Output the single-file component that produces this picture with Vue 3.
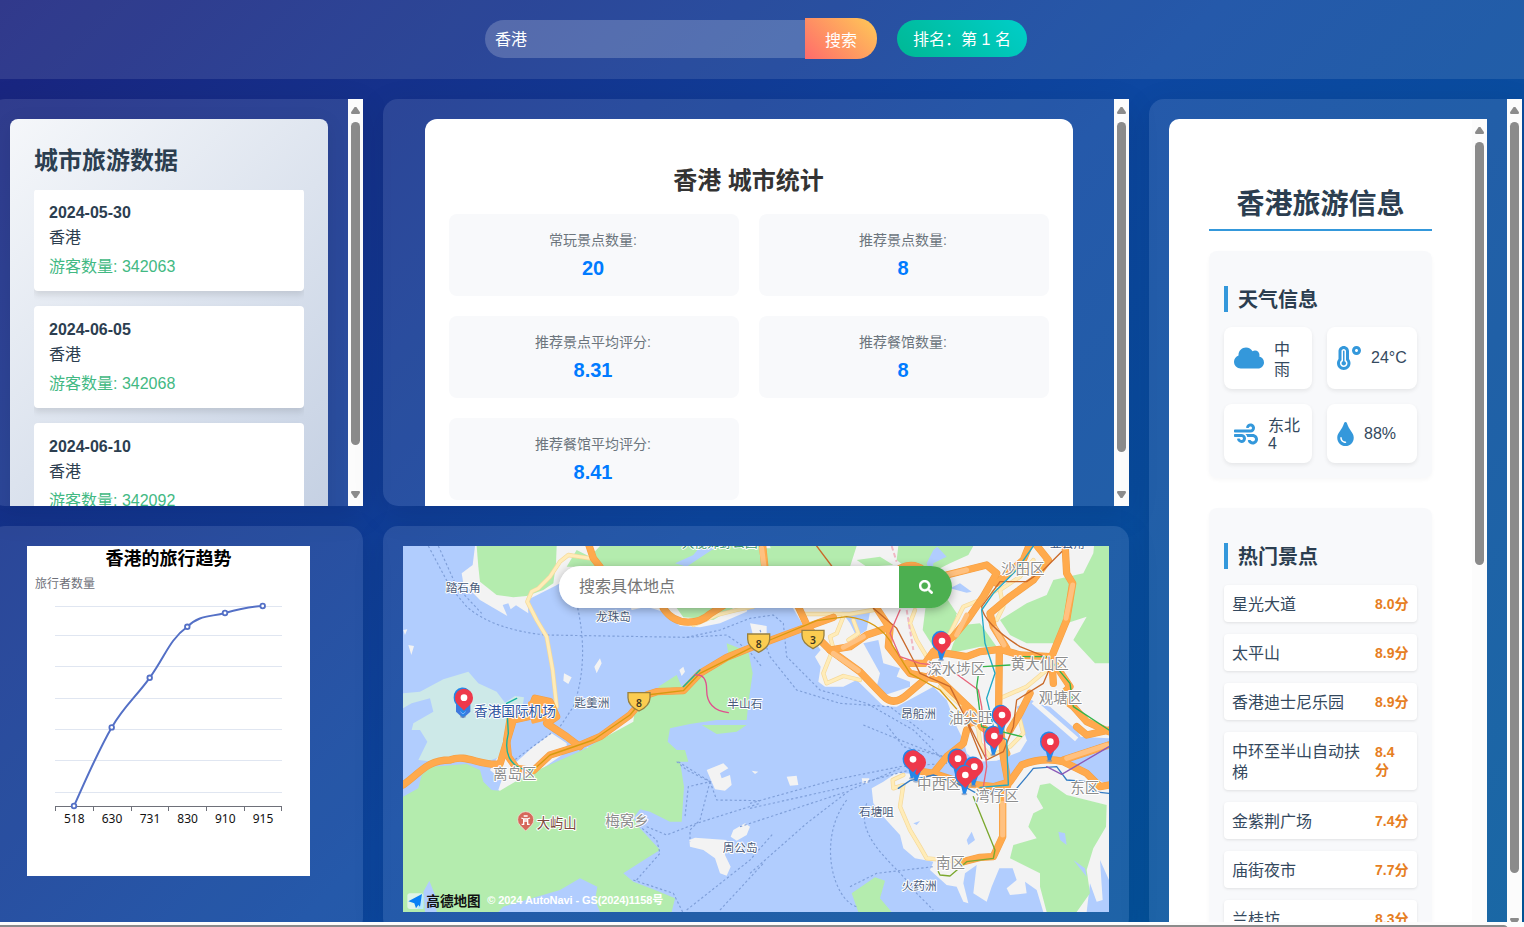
<script setup>
const travel = [
  { date: '2024-05-30', count: 342063 },
  { date: '2024-06-05', count: 342068 },
  { date: '2024-06-10', count: 342092 }
]
const stats = [
  ['常玩景点数量:', '20'],
  ['推荐景点数量:', '8'],
  ['推荐景点平均评分:', '8.31'],
  ['推荐餐馆数量:', '8'],
  ['推荐餐馆平均评分:', '8.41']
]
const spots = [
  ['星光大道', '8.0分'],
  ['太平山', '8.9分'],
  ['香港迪士尼乐园', '8.9分'],
  ['中环至半山自动扶梯', '8.4分'],
  ['金紫荆广场', '7.4分'],
  ['庙街夜市', '7.7分'],
  ['兰桂坊', '8.3分']
]
const points = [
  [47, 260, '518'],
  [84.7, 181.4, '630'],
  [122.7, 131.8, '731'],
  [160.3, 80.8, '830'],
  [198, 67, '910'],
  [235.7, 60, '915']
]
const gridLines = [60.5, 89.5, 120.5, 152.5, 183.5, 214.5, 246.5]
const ticks = [28.5, 66.5, 104.5, 141.5, 179.5, 217.5, 254.5]

const orangeRoads = [
  'M9 735 C60 700 80 660 150 660 C200 640 240 680 300 672 L340 540 L385 530 L405 475 L450 485 L470 530 L440 550 L500 590 L540 620',
  'M330 540 L320 600 L325 650 L350 685 L400 692 L450 645 L530 620 L600 590 L690 525 L740 465 L770 455 L850 452 L900 400 L980 352 L1060 320 L1190 272 L1300 232',
  'M565 10 L580 55 L600 80',
  'M1088 18 L1095 85',
  'M790 205 C830 265 900 250 930 222 L980 190',
  'M1195 200 L1225 265 L1290 330 L1380 395 L1450 468 Q1480 500 1520 465 L1590 405',
  'M1430 205 L1470 265 L1465 320 L1530 400 L1620 420 L1720 515 L1745 560 L1800 600 L1820 640',
  'M1290 330 L1350 320 L1400 285 L1460 265',
  'M1500 85 Q1540 65 1570 90',
  'M1640 105 L1760 75 L1790 100 L1750 170 L1705 235 L1660 290 L1600 335 L1575 370 L1520 370',
  'M1600 345 L1640 340 L1700 350 L1740 335 L1800 328 L1860 345 L1950 350 L2010 440 L1980 470 L2020 500 L2060 545 L2127 575',
  'M1905 10 L1945 60 L1900 120 L1830 170 L1770 220 L1780 260 L1820 325',
  'M1995 10 L2000 100 L2018 130 L2000 240 L1955 350 L1960 430',
  'M1890 10 L1870 60 L1790 130',
  'M1798 330 L1796 500 L1810 650 L1825 730 L1808 780 L1808 890 L1780 950 L1740 952 L1690 965',
  'M1540 690 L1600 700 L1690 730 L1780 740 L1830 725 L1865 675 Q1930 650 1990 665 L2060 700 L2100 740 L2127 735',
  'M1700 570 L1690 610 L1640 650 L1600 700',
  'M1990 660 L2127 615',
  'M2030 560 L2060 585 L2127 570',
  'M1890 460 L1860 520 L1830 570'
]
const yellowRoads = [
  'M570 55 L505 45 L480 65 L450 110 L415 145 L395 155 L382 185 L410 240 L440 290 L458 390 L470 500',
  'M880 255 L950 225 L1010 210 L1060 200',
  'M1210 222 L1350 222 L1420 210',
  'M1330 230 L1310 280 L1290 290 L1300 325 L1270 400 L1280 430 L1330 408 L1380 420',
  'M1360 240 L1375 280 L1345 300',
  'M1545 210 L1530 250 L1550 300 L1580 350',
  'M1790 150 L1740 180 L1690 200 L1650 280 L1620 330',
  'M1900 60 L1860 110 L1800 150 L1810 200 L1790 240',
  'M1940 390 L1880 440 L1800 475',
  'M1620 440 L1700 510 L1735 565 L1740 610 L1770 650 L1830 620 L1870 580 L1860 540',
  'M1510 705 L1478 720 L1480 745 L1510 735 L1500 800 L1530 870 L1560 920 L1580 955 L1690 965'
]
const ferries = [
  'M85 18 L150 140 L200 200 Q280 270 440 285 L860 292 L980 285 L1045 330 L1085 380',
  'M115 18 L170 140 L245 220',
  'M530 190 Q570 360 520 500 L480 560 L330 670',
  'M860 292 L960 270 L1050 235 L1120 225 L1150 250 L1160 350 L1260 450 L1400 490 L1540 570 L1640 670',
  'M1080 270 L1110 350 L1190 450 L1320 490 L1470 500 L1600 600',
  'M1390 555 L1500 600 L1640 655',
  'M1050 790 L1300 720 L1500 680 L1640 670',
  'M1050 805 L1340 740 L1530 690',
  'M1020 860 L1340 755',
  'M1050 1000 L1220 850 L1350 750 L1500 685',
  'M1400 790 C1360 900 1500 980 1550 1060 L1600 1110',
  'M1340 780 C1250 900 1300 1080 1370 1100',
  'M835 665 L930 725 L900 840 L870 870 L870 905',
  'M830 665 L860 690 L930 725 L865 740 L855 830',
  'M740 860 L800 885 L890 850 L1080 790',
  'M710 1020 L780 940 L770 900 L720 860',
  'M700 1020 L820 1060 L850 1120',
  'M860 1110 L1050 960 L1120 880',
  'M960 1110 L1090 970',
  'M930 725 L950 780 L1080 782',
  'M1350 1040 L1430 1000 L1600 980',
  'M1460 555 L1510 620 L1635 650'
]
const labels = [
  ['踏石角', 137, 157, 'place'],
  ['龙珠岛', 588, 243, 'place'],
  ['匙羹洲', 523, 500, 'place'],
  ['半山石', 982, 504, 'place'],
  ['昂船洲', 1503, 535, 'place'],
  ['石塘咀', 1377, 829, 'place'],
  ['火药洲', 1505, 1050, 'place'],
  ['周公岛', 968, 935, 'place'],
  ['亚公角', 1950, 24, 'place'],
  ['大榄郊野公园', 845, 21, 'park'],
  ['沙田区', 1803, 102, 'area'],
  ['深水埗区', 1582, 402, 'area'],
  ['黄大仙区', 1832, 387, 'area'],
  ['观塘区', 1916, 489, 'area'],
  ['油尖旺', 1646, 549, 'area'],
  ['离岛区', 279, 717, 'area'],
  ['梅窝乡', 616, 858, 'area'],
  ['中西区', 1551, 746, 'area'],
  ['湾仔区', 1726, 782, 'area'],
  ['东区', 2011, 760, 'area2'],
  ['南区', 1608, 984, 'area2'],
  ['香港国际机场', 222, 528, 'airport'],
  ['大屿山', 410, 864, 'peak']
]
const pins = [
  [191, 473], [1625, 303], [1782, 588], [1805, 525], [1950, 605],
  [1550, 667], [1538, 658], [1673, 656], [1722, 680], [1695, 705]
]
const shields = [[717, 485, '8'], [1076, 309, '8'], [1239, 298, '3']]
</script>

<template>
  <div class="page">
    <div class="stage">
      <header class="topbar">
        <div class="search">
          <div class="search-input">香港</div>
          <button class="search-btn">搜索</button>
        </div>
        <div class="rank">排名：第 1 名</div>
      </header>

      <main class="board">
        <section class="panel scroll">
          <div class="body left-body">
            <div class="travel">
              <h2>城市旅游数据</h2>
              <div class="travel-list">
                <div v-for="t in travel" :key="t.date" class="travel-item">
                  <b>{{ t.date }}</b>
                  <span>香港</span>
                  <span class="count">游客数量: {{ t.count }}</span>
                </div>
              </div>
            </div>
          </div>
          <div class="bar"><i class="up"></i><i class="thumb t-left"></i><i class="down"></i></div>
        </section>

        <section class="panel scroll">
          <div class="body mid-body">
            <div class="stats">
              <h2>香港 城市统计</h2>
              <div class="stat-grid">
                <div v-for="s in stats" :key="s[0]" class="stat">
                  <span>{{ s[0] }}</span>
                  <b>{{ s[1] }}</b>
                </div>
              </div>
            </div>
          </div>
          <div class="bar"><i class="up"></i><i class="thumb t-mid"></i><i class="down"></i></div>
        </section>

        <section class="panel scroll tall">
          <div class="body right-body">
            <div class="info">
              <div class="info-main">
                <h1>香港旅游信息</h1>
                <div class="box weather-box">
                  <h3>天气信息</h3>
                  <div class="weather">
                    <div class="w-item">
                      <svg width="30" height="24" viewBox="0 0 640 512"><path d="M537.6 226.6c4.1-10.7 6.4-22.4 6.4-34.6 0-53-43-96-96-96-19.7 0-38.1 6-53.3 16.2C367 64.2 315.3 32 256 32c-88.4 0-160 71.6-160 160 0 2.7.1 5.4.2 8.1C40.2 219.8 0 273.2 0 336c0 79.5 64.5 144 144 144h368c70.7 0 128-57.3 128-128 0-61.9-44-113.6-102.4-125.4z" /></svg>
                      <span class="cjk-wrap">中雨</span>
                    </div>
                    <div class="w-item">
                      <svg width="24" height="24" viewBox="0 0 512 512"><path d="M416 0c-52.9 0-96 43.1-96 96s43.1 96 96 96 96-43.1 96-96-43.1-96-96-96zm0 128c-17.7 0-32-14.3-32-32s14.3-32 32-32 32 14.3 32 32-14.3 32-32 32zm-160-16C256 50.1 205.9 0 144 0S32 50.1 32 112v166.5C12.3 303.2 0 334 0 368c0 79.5 64.5 144 144 144s144-64.5 144-144c0-34-12.3-64.9-32-89.5V112zM144 448c-44.1 0-80-35.9-80-80 0-25.5 12.2-48.9 32-63.8V112c0-26.5 21.5-48 48-48s48 21.5 48 48v192.2c19.8 14.8 32 38.3 32 63.8 0 44.1-35.9 80-80 80zm16-125.1V112c0-8.8-7.2-16-16-16s-16 7.2-16 16v210.9c-18.6 6.6-32 24.2-32 45.1 0 26.5 21.5 48 48 48s48-21.5 48-48c0-20.9-13.4-38.5-32-45.1z" /></svg>
                      <span>24°C</span>
                    </div>
                    <div class="w-item">
                      <svg width="24" height="24" viewBox="0 0 512 512"><path d="M156.7 256H16c-8.8 0-16 7.2-16 16v32c0 8.8 7.2 16 16 16h142.2c15.9 0 30.8 10.9 33.4 26.6 3.3 20-12.1 37.4-31.6 37.4-14.1 0-26.1-9.2-30.4-21.9-2.1-6.3-8.6-10.1-15.2-10.1H81.6c-9.8 0-17.7 8.8-15.9 18.4 8.6 44.1 47.6 77.6 94.2 77.6 57.1 0 102.7-50.1 95.2-108.6C249 291 205.4 256 156.7 256zM16 224h336c59.7 0 106.8-54.8 93.8-116.7-7.6-36.2-36.9-65.5-73.1-73.1-55.4-11.6-105.1 24.9-114.9 75.5-1.9 9.6 6.1 18.3 15.8 18.3h32.8c6.7 0 13.1-3.8 15.2-10.1C325.9 105.2 337.9 96 352 96c19.4 0 34.9 17.4 31.6 37.4-2.6 15.7-17.4 26.6-33.4 26.6H16c-8.8 0-16 7.2-16 16v32c0 8.8 7.2 16 16 16zm384 32H243.7c19.3 16.6 33.2 38.8 39.8 64H400c26.5 0 48 21.5 48 48s-21.5 48-48 48c-17.9 0-33.3-9.9-41.6-24.4-2.9-5-8.7-7.6-14.5-7.6h-33.8c-10.9 0-19 10.8-15.3 21.1 17.8 50.6 70.5 84.8 129.4 72.3 41.2-8.7 75.1-41.6 84.7-82.7C526 321.5 470.5 256 400 256z" /></svg>
                      <span class="wind">东北<br />4</span>
                    </div>
                    <div class="w-item">
                      <svg width="17" height="24" viewBox="0 0 352 512"><path d="M205.22 22.09c-7.94-28.78-49.44-30.12-58.44 0C100.01 179.85 0 222.72 0 333.91 0 432.35 78.72 512 176 512s176-79.65 176-178.09c0-111.75-99.79-153.34-146.78-311.82zM176 448c-61.75 0-112-50.25-112-112 0-8.84 7.16-16 16-16s16 7.16 16 16c0 44.11 35.89 80 80 80 8.84 0 16 7.16 16 16s-7.16 16-16 16z" /></svg>
                      <span>88%</span>
                    </div>
                  </div>
                </div>
                <div class="box spots-box">
                  <h3>热门景点</h3>
                  <div v-for="s in spots" :key="s[0]" class="spot">
                    <span>{{ s[0] }}</span>
                    <b>{{ s[1] }}</b>
                  </div>
                </div>
              </div>
              <div class="bar inner"><i class="up"></i><i class="thumb t-inner"></i></div>
            </div>
          </div>
          <div class="bar"><i class="up"></i><i class="thumb t-right"></i><i class="down"></i></div>
        </section>

        <section class="panel chart-panel">
          <svg class="chart" width="283" height="330" viewBox="0 0 283 330">
            <text class="c-title" x="141.5" y="19" text-anchor="middle">香港的旅行趋势</text>
            <text class="c-name" x="8" y="42">旅行者数量</text>
            <path v-for="y in gridLines" :key="y" :d="`M28 ${y}H255`" stroke="#e0e6f1" />
            <path d="M28 260.5H255" stroke="#6e7079" />
            <path v-for="x in ticks" :key="x" :d="`M${x} 260V265`" stroke="#6e7079" />
            <path d="M47 260 C60 231 71 205 84.7 181.4 C97 160 108 152 122.7 131.8 C138 111 142 94 160.3 80.8 C172 69 183 71 198 67 C212 63 220 61 235.7 60" fill="none" stroke="#5470c6" stroke-width="2" />
            <circle v-for="p in points" :key="p[2]" :cx="p[0]" :cy="p[1]" r="2.3" fill="#fff" stroke="#5470c6" stroke-width="1.8" />
            <text v-for="p in points" :key="'l' + p[2]" class="c-label" :x="p[0] + 0.3" y="277" text-anchor="middle">{{ p[2] }}</text>
          </svg>
        </section>

        <section class="panel map-panel">
          <div class="map">
            <svg width="706" height="366" viewBox="9 18 2118 1098">
              <rect x="9" y="18" width="2118" height="1098" fill="#b1cdfe" />
              <g fill="#f3f3f3">
                <path d="M225 18 L218 75 L185 100 L190 130 L240 180 L322 228 L308 195 L325 190 L332 208 L348 196 L385 220 L382 180 L465 138 L480 130 L500 190 L690 195 L695 210 L740 200 L790 215 L840 258 L900 262 L960 250 L1040 215 L1050 185 L1170 190 L1215 265 L1262 330 L1245 350 L1262 380 L1255 425 L1275 440 L1330 440 L1370 420 L1450 498 L1490 500 L1600 440 L1640 480 L1670 560 L1690 600 L1700 640 L1730 665 L1790 662 L1860 635 L1885 595 L1880 565 L1860 520 L1870 480 L1950 500 L2030 570 L2040 590 L2127 595 L2127 18Z" />
                <path d="M1415 745 L1450 725 L1490 698 L1600 705 L1690 738 L1790 745 L1850 690 L1890 665 L1970 660 L2050 700 L2127 735 V1020 L2100 960 L2108 1080 L2090 1085 L2070 1030 L2060 1116 L1930 1116 L1910 1050 L1875 1025 L1880 1060 L1830 1065 L1820 1045 L1850 1020 L1838 985 L1798 985 L1775 1040 L1760 1085 L1720 1060 L1730 975 L1695 1000 L1690 1030 L1705 1090 L1690 1085 L1670 1040 L1640 1035 L1590 990 L1600 965 L1545 955 L1510 925 L1500 885 L1450 830 L1420 790Z" />
                <path d="M350 665 L400 620 L455 580 L500 610 L500 635 L400 705 L350 745 L310 762 L295 750 L305 720 L270 690 L300 640Z" />
                <path d="M560 622 L580 622 L583 650 L572 655Z M600 590 L700 520 L705 550 L640 590Z" />
                <path d="M920 690 L970 670 L985 685 L960 700 L965 715 L990 705 L995 735 L975 752 L945 748 L935 725Z M1000 870 L1035 850 L1050 860 L1040 885 L1010 902 L992 890Z M868 900 L885 893 L980 900 L975 945 L992 980 L980 1007 L960 1000 L945 955 L910 930 L870 920Z" />
                <path d="M1160 710 L1190 707 L1195 735 L1170 737Z M1385 715 L1408 715 L1405 730 L1388 730Z M1055 692 L1075 695 L1065 702Z M600 355 L605 370 L590 400 L583 380Z M492 400 L515 412 L505 432 L490 422Z M25 315 L42 318 L34 345Z M10 270 L22 268 L15 285Z M850 380 L855 395 L845 408 L838 390Z" />
                <path d="M1050 250 L1100 258 L1100 280 L1060 290Z" />
              </g>
              <g fill="#b4ecae">
                <path d="M230 18 H470 L468 70 L460 130 L430 150 L380 168 L340 172 L290 165 L240 125 L235 80Z" />
                <path d="M600 18 H1075 L1100 25 H1245 L1320 80 H500 L530 30 L570 50Z" />
                <path d="M1110 18 H1370 L1350 80 H1130Z M1370 60 L1440 50 L1480 75 L1400 80Z" />
                <path d="M830 204 H1000 L940 240 L890 235 L850 232Z" />
                <path d="M1495 18 H1720 L1705 45 L1650 70 L1600 95 L1520 85 L1490 60Z" />
                <path d="M1580 175 L1630 160 L1670 220 L1650 310 L1600 320 L1568 270Z" />
                <path d="M1880 190 L1940 165 L1960 120 L2050 100 L2080 40 L2082 18 H2127 V370 L2085 370 L2020 300 L2060 230 L2000 250 L1970 310 L1880 310 L1830 285 L1800 240Z" />
                <path d="M1660 310 L1690 255 L1740 250 L1790 320 L1740 320 L1650 340Z" />
                <path d="M9 770 L55 745 L65 705 L95 680 L200 672 L240 690 L250 725 L275 750 L300 752 L380 705 L560 625 L600 600 L700 545 L705 500 L780 455 L775 440 L830 405 L845 440 L890 395 L985 340 L980 310 L1045 335 L1058 400 L1045 490 L1040 540 L950 540 L870 552 L810 565 L803 605 L830 630 L855 630 L865 665 L840 665 L852 740 L845 845 L810 845 L750 815 L720 808 L700 835 L720 865 L780 930 L740 955 L670 1000 L700 1025 L765 1050 L825 1075 L815 1116 H600 L585 1080 L592 1040 L540 1015 L480 1050 L310 1100 L295 1116 H110 L105 1065 L88 1022 L70 1055 L75 1116 H9Z" />
                <path d="M905 555 H1040 L1010 575 L950 582Z" />
                <path d="M1920 735 L1950 730 L2000 765 L2120 795 L2118 860 L2080 925 L2060 990 L2070 1060 L2030 1116 H1940 L1920 1040 L1920 1000 L1830 955 L1840 915 L1910 895 L1885 860 L1900 820 L1930 805 L1910 770Z" />
                <path d="M1425 1012 L1455 1022 L1440 1075 L1475 1116 H1375 L1355 1060Z" />
              </g>
              <path fill="#cde9e8" d="M9 460 L60 455 L130 418 L205 395 L235 430 L290 455 L315 488 L345 468 L372 472 L368 498 L325 520 L310 600 L300 650 L260 665 L180 650 L130 655 L100 665 L55 660 L82 605 L60 570 L35 570 L40 550 L100 515 L90 475 L35 490 L9 505Z" />
              <g fill="#b1cdfe">
                <path d="M1390 310 L1435 300 L1450 370 L1500 385 L1490 410 L1530 425 L1530 440 L1455 465 L1430 440 L1440 400Z M1325 215 L1410 215 L1400 270 L1370 290 L1350 250Z" />
                <path d="M1550 475 L1600 465 L1605 480 L1570 495 L1605 510 L1560 525Z" />
                <path d="M1850 500 L1895 480 L2030 570 L2070 640 L1940 640 L1880 600Z" />
                <path d="M1600 30 L1612 20 L1640 50 L1600 70 L1595 120 L1580 70Z M1650 145 L1680 130 L1715 155 L1700 158Z M825 70 L880 45 L900 20 L950 20 L890 60 L860 80Z M1540 850 L1560 843 L1550 855Z M1700 900 L1715 875 L1725 900 L1705 915Z M1975 875 L1995 880 L2000 915 L1980 900Z M2020 960 L2055 985 L2060 1010Z" />
              </g>
              <path d="M1900 485 L2030 598" stroke="#f3f3f3" stroke-width="15" />
              <g fill="none" stroke="#7f9fd9" stroke-width="3.5" stroke-dasharray="7 7">
                <path v-for="d in ferries" :key="d" :d="d" />
              </g>
              <g fill="none" stroke-linejoin="round" stroke-linecap="round">
                <path v-for="d in yellowRoads" :key="'c' + d" :d="d" stroke="#f5d99a" stroke-width="13" />
                <path v-for="d in yellowRoads" :key="d" :d="d" stroke="#ffecb8" stroke-width="9" />
                <path v-for="d in orangeRoads" :key="'c' + d" :d="d" stroke="#f5a044" stroke-width="22" />
                <path v-for="d in orangeRoads" :key="d" :d="d" stroke="#ffaa4d" stroke-width="18.5" />
                <path d="M390 490 L440 490 L460 530 L400 545Z M1690 500 L1740 545 L1710 555Z" fill="#ffaa4d" stroke="#ffaa4d" stroke-width="12" />
                <path d="M1808 790 V885 M2018 135 L1998 235 M1700 225 L1670 285 M1785 265 L1812 315 M1640 105 L1700 90 M1085 25 L1092 80 M1300 340 L1375 392 M1330 322 L1390 290 M2000 655 L2120 615" stroke="#ffc180" stroke-width="15" />
                <g stroke-width="4">
                  <path d="M350 475 L320 490 L325 580 C310 640 330 680 380 690 L400 690 M850 440 L900 390" stroke="#12b39f" />
                  <path d="M400 690 L450 645 L580 600 L690 525 L740 465 L850 452 L900 400 L990 355 L1060 320 M1110 300 L1250 242 L1340 230 Q1440 240 1480 320 L1530 400 L1620 450 L1690 530" stroke="#d69a10" />
                  <path d="M885 405 Q920 400 920 450 Q920 510 985 518" stroke="#e0508e" />
                  <path d="M1420 205 L1490 265 L1540 360 L1560 400 L1650 440 L1690 520 L1745 655 M1985 35 L1930 90 L1880 125 L1800 125 L1745 200 Q1750 250 1860 320 L1960 360 L1930 430 L1850 480 L1840 560 L1810 635 L1760 660 L1700 540 M1250 18 L1295 78" stroke="#c96a2b" />
                  <path d="M1500 210 L1470 280 L1500 350 L1560 370 L1640 380 L1735 450 L1745 500 L1760 680 L1750 740" stroke="#e76579" />
                  <path d="M1900 18 L1850 90 L1780 160 L1745 210 L1755 310 L1785 400 L1760 475 L1785 580 L1820 600 L1825 735 L1740 742" stroke="#22a9c5" />
                  <path d="M1750 380 L1830 375 M1735 405 L1730 440 L1745 560 L1865 590 M1870 350 H1940 M1960 370 L2010 430 L2020 500 L2127 570" stroke="#33b44a" />
                  <path d="M1720 770 L1785 930 L1780 955 L1700 965 L1650 1008 L1620 1005 L1615 995" stroke="#7ba82e" />
                  <path d="M1495 745 L1530 722 L1600 705 L1690 738 L1730 760 L1850 745 L1880 710 L1900 685 L1970 680 L2000 720 L2060 725 L2080 755 L2127 760" stroke="#347cc4" />
                  <path d="M1940 680 L1985 703 L2127 620" stroke="#8a5ab8" />
                </g>
              </g>
              <path d="M1475 18 L1490 65 M1520 210 L1540 330" stroke="#f0b8c4" stroke-width="6" fill="none" stroke-dasharray="14 8" />
              <g v-for="s in shields" :key="s[0]">
                <path :transform="`translate(${s[0]} ${s[1]})`" d="M-33 -27 H33 V-12 Q33 12 0 28 Q-33 12 -33 -12Z" fill="#fbcc50" stroke="#98803f" stroke-width="4" />
                <text class="shield" :x="s[0]" :y="s[1] + 15" text-anchor="middle">{{ s[2] }}</text>
              </g>
              <path d="M189 535 L168 515 V480 H211 V515Z" fill="#3f78dc" />
              <path d="M377 873 L360 856 A24 24 0 1 1 394 856Z" fill="#d5685a" stroke="#fbe4df" stroke-width="2" />
              <path d="M364 834 Q377 840 390 834 M369 843 H385 M371 836 V853 M383 836 V853 M365 853 H373 M381 853 H389 M371 828 H383" fill="none" stroke="#fff" stroke-width="4" />
              <text v-for="l in labels" :key="l[0]" :x="l[1]" :y="l[2]" :class="['lab', l[3]]">{{ l[0] }}</text>
              <g v-for="p in pins" :key="p[0]" :transform="`translate(${p[0]} ${p[1]})`">
                <ellipse cx="-2" cy="57" rx="9" ry="4" fill="#7187ad" opacity=".6" />
                <path d="M-30 0 A27 28 0 0 1 24 -5 L2 56 H-6 L-12 30 Q-30 18 -30 0Z" fill="#2486e8" />
                <path d="M-26 0 A27 27 0 0 1 28 0 C28 18 13 25 1 39 C-11 25 -26 18 -26 0Z" fill="#ee384b" />
                <circle cx="1" cy="0" r="10" fill="#fff" />
              </g>
              <path d="M181 515 L189 522 L197 515" fill="none" stroke="#7fb0fb" stroke-width="3" />
              <rect x="22" y="1060" width="48" height="47" rx="8" fill="#dff4e8" />
              <path d="M70 1058 L52 1107 H70Z" fill="#b9e9ff" />
              <path d="M66 1062 L25 1084 L43 1090 L48 1105 L55 1095 L60 1100Z" fill="#0980f5" />
              <text class="brand" x="79" y="1097" textLength="163" lengthAdjust="spacingAndGlyphs">高德地图</text>
              <text class="copyright" x="262" y="1092" textLength="528">© 2024 AutoNavi - GS(2024)1158号</text>
            </svg>
            <div class="map-search">
              <div class="map-input">搜索具体地点</div>
              <button class="map-btn">
                <svg width="14" height="14" viewBox="0 0 512 512"><path fill="#fff" stroke="#fff" stroke-width="14" d="M505 442.7L405.3 343c-4.5-4.5-10.6-7-17-7H372c27.6-35.3 44-79.7 44-128C416 93.1 322.9 0 208 0S0 93.1 0 208s93.1 208 208 208c48.3 0 92.7-16.4 128-44v16.3c0 6.4 2.5 12.5 7 17l99.7 99.7c9.4 9.4 24.6 9.4 33.9 0l28.3-28.3c9.4-9.4 9.4-24.6.1-34zM208 336c-70.7 0-128-57.2-128-128 0-70.7 57.2-128 128-128 70.7 0 128 57.2 128 128 0 70.7-57.2 128-128 128z" /></svg>
              </button>
            </div>
          </div>
        </section>
      </main>
    </div>
    <div class="hbar"><i></i></div>
  </div>
</template>

<style>
body {
  overflow: hidden;
}
</style>

<style scoped>
* {
  box-sizing: border-box;
}
.page {
  width: 1524px;
  height: 927px;
  overflow: hidden;
  font-family: "Liberation Sans", "Noto Sans CJK SC", sans-serif;
  font-size: 16px;
  color: #2c3e50;
}
.stage {
  height: 922px;
  overflow: hidden;
  background: linear-gradient(135deg, #1a237e, #0d47a1, #01579b);
}
.hbar {
  height: 5px;
  padding-top: 3px;
  background: #fcfcfc;
  overflow: hidden;
}
.hbar i {
  display: block;
  width: 1518px;
  height: 9px;
  margin-left: -10px;
  border-radius: 5px;
  background: #8b8b8b;
}
h1, h2, h3 {
  margin: 0;
}
button {
  border: 0;
  padding: 0;
  font: inherit;
  color: #fff;
}
.topbar {
  height: 79px;
  padding: 18px 12px 20px 0;
  display: flex;
  justify-content: center;
  align-items: flex-start;
  gap: 20px;
  background: rgba(255, 255, 255, 0.1);
  color: #fff;
}
.search {
  display: flex;
  align-items: flex-start;
}
.search-input {
  width: 320px;
  height: 38px;
  margin-top: 2px;
  padding-left: 10px;
  line-height: 40px;
  border-radius: 20px 0 0 20px;
  background: rgba(255, 255, 255, 0.2);
}
.search-btn {
  width: 72px;
  height: 41px;
  border-radius: 0 20px 20px 0;
  background: linear-gradient(45deg, #ff6b6b, #feca57);
}
.rank {
  width: 130px;
  height: 37px;
  margin-top: 2px;
  text-align: center;
  line-height: 39px;
  border-radius: 20px;
  white-space: nowrap;
  background: linear-gradient(45deg, #00b894, #00cec9);
}
.board {
  width: 1532px;
  margin: 20px 0 0 -10px;
  display: grid;
  grid-template-columns: 373px 746px 373px;
  grid-template-rows: 407px 407px;
  gap: 20px;
}
.panel {
  border-radius: 15px;
  background: rgba(255, 255, 255, 0.1);
  box-shadow: 0 8px 32px rgba(0, 0, 0, 0.1);
  overflow: hidden;
}
.scroll {
  display: flex;
  border-radius: 15px 0 0 15px;
}
.tall {
  grid-row: span 2;
}
.body {
  flex: 1;
  min-width: 0;
  overflow: hidden;
  padding: 20px;
}
.bar {
  flex: none;
  width: 15px;
  padding: 8px 3px;
  display: flex;
  flex-direction: column;
  background: #fcfcfc;
}
.bar .up, .bar .down {
  flex: none;
  width: 9px;
  height: 7px;
  background: #8b8b8b;
}
.bar .up {
  clip-path: polygon(40% 0, 60% 0, 100% 75%, 95% 100%, 5% 100%, 0 75%);
}
.bar .down {
  margin-top: auto;
  clip-path: polygon(5% 0, 95% 0, 100% 25%, 60% 100%, 40% 100%, 0 25%);
}
.thumb {
  flex: none;
  margin-top: 8px;
  border-radius: 5px;
  background: #8b8b8b;
}
.t-left { height: 323px; }
.t-mid { height: 330px; }
.t-right { height: 751px; }
.t-inner { height: 423px; }

.travel {
  width: 318px;
  height: 420px;
  padding: 24px;
  border-radius: 8px;
  background: linear-gradient(135deg, #f5f7fa, #c3cfe2);
  box-shadow: 0 4px 20px rgba(0, 0, 0, 0.08);
}
.travel h2 {
  height: 47px;
  line-height: 36px;
  font-size: 24px;
}
.travel-list {
  overflow: hidden;
  display: flex;
  flex-direction: column;
  gap: 15px;
}
.travel-item {
  flex: none;
  height: 102px;
  padding: 11px 15px 9px;
  display: flex;
  flex-direction: column;
  border-radius: 4px;
  background: #fff;
  box-shadow: 0 4px 6px rgba(0, 0, 0, 0.1);
  line-height: 25px;
}
.travel-item:first-child {
  margin-top: -1.4px;
}
.travel-item .count {
  margin-top: 4px;
  color: #42b983;
}
.mid-body {
  padding-left: 42px;
}
.stats {
  width: 648px;
  height: 460px;
  padding: 44px 24px;
  border-radius: 12px;
  background: #fff;
}
.stats h2 {
  height: 51px;
  line-height: 36px;
  padding-right: 1px;
  text-align: center;
  font-size: 24px;
  color: #333;
}
.stat-grid {
  display: grid;
  grid-template-columns: 290px 290px;
  grid-auto-rows: 82px;
  gap: 20px;
}
.stat {
  padding: 14px 2px 0 0;
  display: flex;
  flex-direction: column;
  align-items: center;
  border-radius: 8px;
  background: #f8f9fb;
}
.stat span {
  height: 26px;
  line-height: 24px;
  font-size: 14px;
  color: #6c757d;
}
.stat b {
  line-height: 28px;
  font-size: 20px;
  color: #007bff;
}
.info {
  width: 318px;
  height: 900px;
  display: flex;
  border-radius: 10px 0 0 0;
  overflow: hidden;
  background: #fff;
}
.info-main {
  width: 303px;
  padding: 60px 40px 0;
}
.inner {
  height: 900px;
}
h1 {
  height: 52px;
  line-height: 51px;
  font-size: 28px;
  text-align: center;
  border-bottom: 2px solid #3498db;
  margin-bottom: 20px;
}
.box {
  margin-bottom: 30px;
  padding: 35px 15px 15px;
  border-radius: 8px;
  background: #f8f9fb;
  box-shadow: 0 2px 4px rgba(0, 0, 0, 0.03);
}
.weather-box {
  height: 227px;
}
h3 {
  height: 26px;
  line-height: 29px;
  padding-left: 10px;
  border-left: 4px solid #3498db;
  font-size: 20px;
}
.weather {
  margin-top: 15px;
  display: grid;
  grid-template-columns: 88px 90px;
  grid-template-rows: 62px 59px;
  gap: 15px;
}
.w-item {
  display: flex;
  align-items: center;
  gap: 10px;
  padding: 0 10px;
  border-radius: 8px;
  background: #fff;
  box-shadow: 0 2px 4px rgba(0, 0, 0, 0.08);
  line-height: 20px;
  white-space: nowrap;
  color: #34495e;
}
.w-item svg {
  flex: none;
  fill: #3498db;
}
.cjk-wrap {
  width: 16px;
  padding-top: 3px;
  white-space: normal;
}
.wind {
  padding-top: 2px;
  line-height: 18px;
}
.spots-box h3 {
  margin-bottom: 16px;
}
.spot {
  display: flex;
  justify-content: space-between;
  align-items: center;
  min-height: 37px;
  margin-bottom: 12px;
  padding: 8px;
  border-radius: 4px;
  background: #fff;
  box-shadow: 0 1px 3px rgba(0, 0, 0, 0.1);
  line-height: 21px;
}
.spot span {
  width: 132px;
  flex: none;
  margin: 1px 0 -1px;
  color: #34495e;
}
.spot b {
  width: 34px;
  font-size: 14px;
  line-height: 18px;
  color: #e67e22;
  white-space: nowrap;
}
.spot:nth-of-type(4) b {
  white-space: normal;
  word-break: break-all;
  padding-right: 2px;
}
.chart-panel {
  padding: 20px 0 0 37px;
}
.chart {
  display: block;
  background: #fff;
}
.c-title {
  font: bold 18px "Noto Sans CJK SC", sans-serif;
  fill: #000;
}
.c-name {
  font: 12px "Noto Sans CJK SC", sans-serif;
  fill: #6e7079;
}
.c-label {
  font: 12px "Noto Sans", sans-serif;
  fill: #111;
}
.map-panel {
  padding: 20px;
}
.map {
  position: relative;
  width: 706px;
  height: 366px;
  overflow: hidden;
}
.map > svg {
  display: block;
}
.lab {
  font-family: "Noto Sans CJK SC", sans-serif;
  paint-order: stroke;
  stroke: #fff;
  stroke-width: 6px;
  stroke-linejoin: round;
}
.place { font-size: 35px; fill: #4a5b7a; }
.park { font-size: 38px; fill: #3d9a6a; }
.area, .area2 { font-size: 43.5px; fill: #8d8d8d; }
.airport { font-size: 41px; fill: #2d54a0; }
.peak { font-size: 40px; fill: #7a4a3c; }
.shield {
  font: 600 31px "Noto Sans", sans-serif;
  fill: #3d3620;
}
.brand {
  font: bold 40px "Noto Sans CJK SC", sans-serif;
  fill: #111;
}
.copyright {
  font: bold 33px "Liberation Sans", "Noto Sans CJK SC", sans-serif;
  fill: #fff;
}
.map-search {
  position: absolute;
  left: 156px;
  top: 20px;
  display: flex;
  width: 393px;
  height: 42px;
  border-radius: 21px;
  overflow: hidden;
  box-shadow: 0 2px 10px rgba(0, 0, 0, 0.3);
}
.map-input {
  width: 340px;
  padding-left: 20px;
  line-height: 42px;
  background: #fff;
  color: #757575;
}
.map-btn {
  width: 53px;
  background: #4caf50;
  display: flex;
  align-items: center;
  justify-content: center;
}
</style>
